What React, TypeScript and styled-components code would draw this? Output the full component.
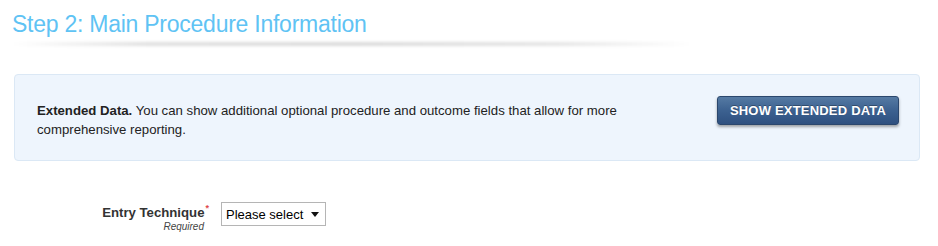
import styled, { createGlobalStyle } from 'styled-components';

const GlobalStyle = createGlobalStyle`
  body {
    margin: 0;
    background: #ffffff;
    font-family: 'Liberation Sans', Arial, sans-serif;
  }
`;

const Page = styled.div`
  width: 938px;
  padding: 0 0 0 12px;
  box-sizing: border-box;
`;

const StepHeader = styled.div`
  width: 680px;
  padding-top: 10px;
`;

const StepTitle = styled.h2`
  margin: 0;
  font-size: 23px;
  font-weight: normal;
  line-height: 28px;
  color: #5fc3f4;
  letter-spacing: -0.25px;
`;

const TitleShadow = styled.div`
  height: 4px;
  margin-top: 4px;
  background: linear-gradient(to right, rgba(0,0,0,0) 0%, rgba(0,0,0,0.12) 20%, rgba(0,0,0,0.14) 50%, rgba(0,0,0,0.1) 80%, rgba(0,0,0,0) 100%);
  filter: blur(1.5px);
`;

const InfoPanel = styled.div`
  margin: 28px 0 0 2px;
  width: 906px;
  height: 87px;
  box-sizing: border-box;
  padding: 0 20px 0 22px;
  display: flex;
  align-items: flex-start;
  justify-content: space-between;
  background: #eef5fd;
  border: 1px solid #dbe8f5;
  border-radius: 4px;
`;

const InfoText = styled.p`
  margin: 0;
  padding-top: 26px;
  max-width: 610px;
  font-size: 13.2px;
  line-height: 19px;
  color: #222;
`;

const ExtendButton = styled.button`
  width: 182px;
  height: 29px;
  margin-top: 21px;
  border: 1px solid #2b476d;
  border-radius: 3px;
  background: linear-gradient(to bottom, #557aa3 0%, #3c6190 50%, #2e5080 100%);
  box-shadow: 0 2px 3px rgba(0, 0, 0, 0.35);
  color: #ffffff;
  font-family: 'Liberation Sans', Arial, sans-serif;
  font-weight: bold;
  font-size: 13px;
  letter-spacing: 0.2px;
  text-shadow: 0 -1px 0 rgba(0, 0, 0, 0.3);
  cursor: pointer;
`;

const FormRow = styled.div`
  display: flex;
  align-items: flex-start;
  margin-top: 44px;
`;

const LabelCell = styled.div`
  width: 197px;
  text-align: right;
`;

const FieldLabel = styled.label`
  display: block;
  font-size: 13.2px;
  font-weight: bold;
  color: #333;
  line-height: 16px;
`;

const RequiredMark = styled.sup`
  color: #e0474c;
  font-size: 9px;
  margin-left: 1px;
  vertical-align: 6px;
  line-height: 0;
`;

const Hint = styled.span`
  display: block;
  font-size: 10px;
  font-style: italic;
  color: #444;
  line-height: 12px;
  margin-right: 5px;
`;

const SelectBox = styled.div`
  margin-left: 12px;
  margin-top: -3px;
  width: 105px;
  height: 24px;
  flex-shrink: 0;
  box-sizing: border-box;
  border: 1px solid #b5b5b5;
  display: flex;
  align-items: center;
  justify-content: space-between;
  padding: 0 6px 0 4px;
  font-size: 13px;
  white-space: nowrap;
  color: #000;
  background: #fff;
`;

const Caret = styled.span`
  width: 0;
  height: 0;
  border-left: 4px solid transparent;
  border-right: 4px solid transparent;
  border-top: 5px solid #111;
`;

export default function App() {
  return (
    <Page>
      <GlobalStyle />
      <StepHeader>
        <StepTitle>Step 2: Main Procedure Information</StepTitle>
        <TitleShadow />
      </StepHeader>

      <InfoPanel>
        <InfoText>
          <b>Extended Data.</b> You can show additional optional procedure and outcome fields that allow for more
          comprehensive reporting.
        </InfoText>
        <ExtendButton>SHOW EXTENDED DATA</ExtendButton>
      </InfoPanel>

      <FormRow>
        <LabelCell>
          <FieldLabel>
            Entry Technique<RequiredMark>*</RequiredMark>
          </FieldLabel>
          <Hint>Required</Hint>
        </LabelCell>
        <SelectBox>
          Please select
          <Caret />
        </SelectBox>
      </FormRow>
    </Page>
  );
}
